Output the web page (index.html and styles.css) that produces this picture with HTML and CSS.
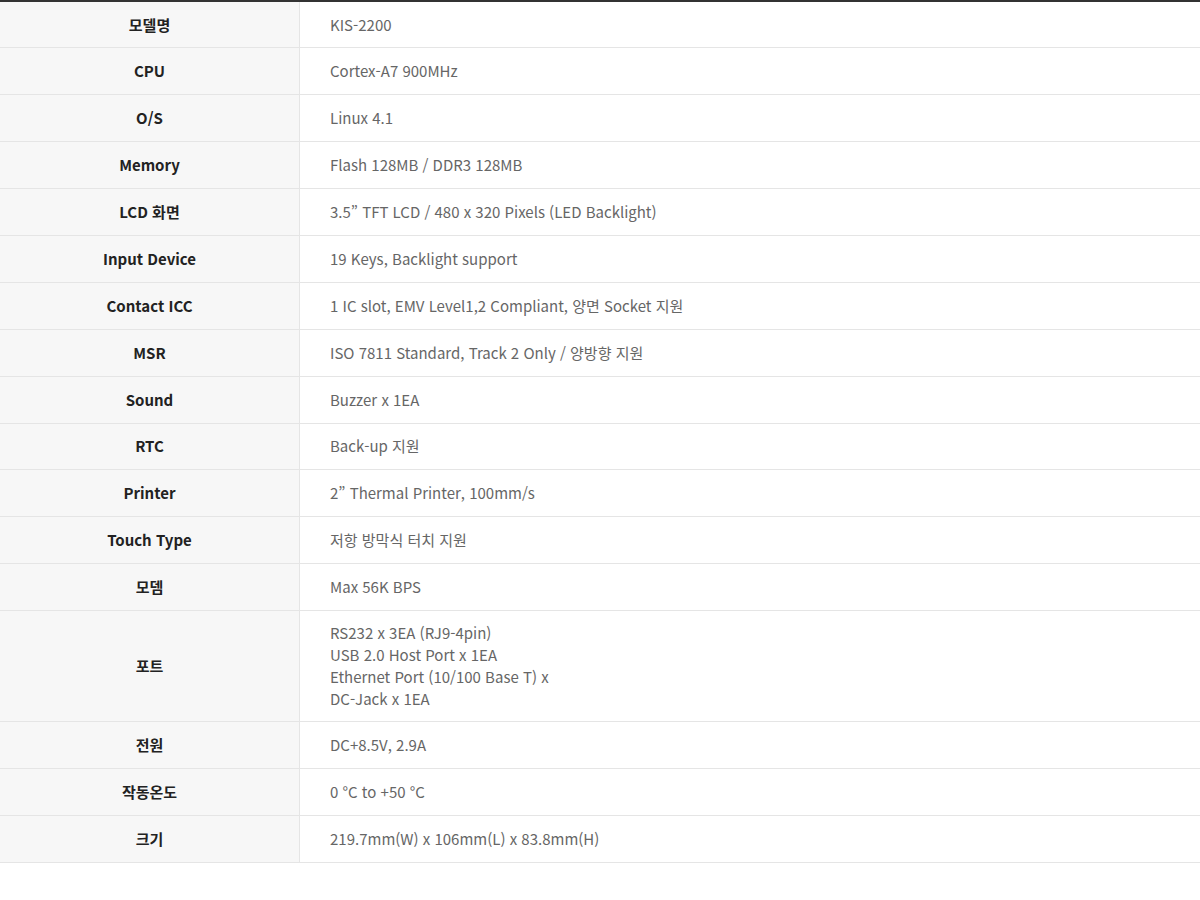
FILE: index.html
```html
<!DOCTYPE html>
<html lang="ko">
<head>
<meta charset="utf-8">
<title>KIS-2200 사양</title>
<link rel="stylesheet" href="styles.css">
</head>
<body>
<table class="spec">
  <tbody>
    <tr><th>모델명</th><td>KIS-2200</td></tr>
    <tr><th>CPU</th><td>Cortex-A7 900MHz</td></tr>
    <tr><th>O/S</th><td>Linux 4.1</td></tr>
    <tr><th>Memory</th><td>Flash 128MB / DDR3 128MB</td></tr>
    <tr><th>LCD 화면</th><td>3.5” TFT LCD / 480 x 320 Pixels (LED Backlight)</td></tr>
    <tr><th>Input Device</th><td>19 Keys, Backlight support</td></tr>
    <tr><th>Contact ICC</th><td>1 IC slot, EMV Level1,2 Compliant, 양면 Socket 지원</td></tr>
    <tr><th>MSR</th><td>ISO 7811 Standard, Track 2 Only / 양방향 지원</td></tr>
    <tr><th>Sound</th><td>Buzzer x 1EA</td></tr>
    <tr><th>RTC</th><td>Back-up 지원</td></tr>
    <tr><th>Printer</th><td>2” Thermal Printer, 100mm/s</td></tr>
    <tr><th>Touch Type</th><td>저항 방막식 터치 지원</td></tr>
    <tr><th>모뎀</th><td>Max 56K BPS</td></tr>
    <tr><th>포트</th><td>RS232 x 3EA (RJ9-4pin)<br>USB 2.0 Host Port x 1EA<br>Ethernet Port (10/100 Base T) x<br>DC-Jack x 1EA</td></tr>
    <tr><th>전원</th><td>DC+8.5V, 2.9A</td></tr>
    <tr><th>작동온도</th><td>0 °C to +50 °C</td></tr>
    <tr><th>크기</th><td>219.7mm(W) x 106mm(L) x 83.8mm(H)</td></tr>
  </tbody>
</table>
</body>
</html>
```
FILE: styles.css
```css
html, body {
  margin: 0;
  padding: 0;
  background: #fff;
}
body {
  font-family: "Noto Sans CJK KR", "Noto Sans", sans-serif;
  font-size: 15px;
  line-height: 22px;
}
.spec {
  width: 1200px;
  border-collapse: collapse;
  border-top: 2px solid #333;
  table-layout: fixed;
}
.spec tr {
  height: 46.9px;
}
.spec th,
.spec td {
  border-bottom: 1px solid #e5e5e5;
  padding: 11px 0;
  vertical-align: middle;
}
.spec th {
  width: 299px;
  background: #f7f7f7;
  border-right: 1px solid #e5e5e5;
  color: #222;
  font-weight: 700;
  text-align: center;
}
.spec td {
  padding-left: 30px;
  color: #666;
  font-weight: 400;
  text-align: left;
}
```
